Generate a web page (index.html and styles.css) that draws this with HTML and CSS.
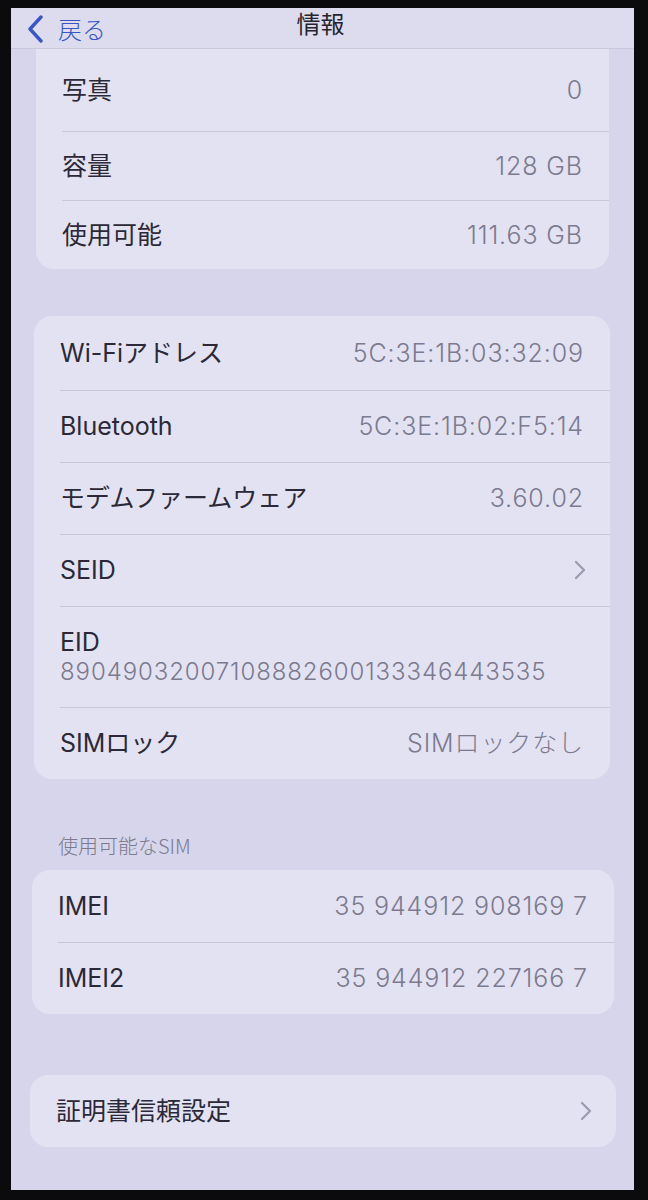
FILE: index.html
```html
<!DOCTYPE html>
<html lang="ja">
<head>
<meta charset="utf-8">
<title>情報</title>
<link rel="stylesheet" href="styles.css">
</head>
<body>
<div class="device">
  <div class="screen">
    <header class="nav">
      <div class="back">
        <svg class="back-icon" width="18" height="28" viewBox="0 0 18 28"><path d="M15 2 L4 14 L15 26" fill="none" stroke="#3b55c6" stroke-width="3.4" stroke-linecap="round" stroke-linejoin="round"/></svg>
        <span class="back-text">戻る</span>
      </div>
      <h1 class="title">情報</h1>
      <div class="nav-spacer"></div>
    </header>

    <section class="card card-1">
      <div class="row row-first"><span class="label">写真</span><span class="value">0</span></div>
      <div class="row"><span class="label">容量</span><span class="value">128 GB</span></div>
      <div class="row"><span class="label">使用可能</span><span class="value">111.63 GB</span></div>
    </section>

    <section class="card card-2">
      <div class="row row-tall"><span class="label">Wi-Fiアドレス</span><span class="value">5C:3E:1B:03:32:09</span></div>
      <div class="row"><span class="label">Bluetooth</span><span class="value">5C:3E:1B:02:F5:14</span></div>
      <div class="row"><span class="label">モデムファームウェア</span><span class="value">3.60.02</span></div>
      <div class="row"><span class="label">SEID</span>
        <svg class="chev" width="12" height="20" viewBox="0 0 12 20"><path d="M2 2 L10 10 L2 18" fill="none" stroke="#9b9aae" stroke-width="2.2" stroke-linecap="round" stroke-linejoin="round"/></svg>
      </div>
      <div class="row row-stack"><span class="label">EID</span><span class="value eid">89049032007108882600133346443535</span></div>
      <div class="row"><span class="label">SIMロック</span><span class="value">SIMロックなし</span></div>
    </section>

    <p class="section-head">使用可能なSIM</p>
    <section class="card card-3">
      <div class="row"><span class="label">IMEI</span><span class="value">35 944912 908169 7</span></div>
      <div class="row"><span class="label">IMEI2</span><span class="value">35 944912 227166 7</span></div>
    </section>

    <section class="card card-4">
      <div class="row"><span class="label">証明書信頼設定</span>
        <svg class="chev" width="12" height="20" viewBox="0 0 12 20"><path d="M2 2 L10 10 L2 18" fill="none" stroke="#9b9aae" stroke-width="2.2" stroke-linecap="round" stroke-linejoin="round"/></svg>
      </div>
    </section>
  </div>
</div>
</body>
</html>
```

FILE: styles.css
```css
* { box-sizing: border-box; }
html, body { margin: 0; padding: 0; background: #0b0b0d; }
body {
  width: 648px;
  height: 1200px;
  overflow: hidden;
  font-family: Inter, "Noto Sans CJK JP", sans-serif;
}
.device {
  padding: 8px 14px 10px 11px;
  background: #0b0b0d;
  height: 1200px;
}
.screen {
  height: 1182px;
  background: #d6d5eb;
  display: flex;
  flex-direction: column;
}
.nav {
  height: 41px;
  flex: none;
  background: #dddcef;
  border-bottom: 1px solid #c9c8dc;
  display: grid;
  grid-template-columns: 1fr auto 1fr;
  align-items: center;
}
.back {
  display: flex;
  align-items: center;
  gap: 14px;
  padding-left: 15px;
  margin-top: 2px;
}
.back-text {
  font-family: "Noto Sans CJK JP", sans-serif;
  font-size: 24px;
  font-weight: 300;
  color: #3b55c6;
  line-height: 1;
}
.title {
  align-self: start;
  margin: 1px 0 0 0;
  font-family: "Noto Sans CJK JP", sans-serif;
  font-size: 24px;
  font-weight: 400;
  color: #26242f;
  line-height: 28px;
  transform: translateX(-2px);
}
.card {
  background: #e3e2f3;
  border-radius: 18px;
  flex: none;
}
.card-1 { margin: 0 25px 0 25px; border-radius: 0 0 18px 18px; }
.card-2 { margin: 47px 24px 0 23px; }
.card-3 { margin: 0 20px 0 21px; }
.card-4 { margin: 61px 18px 0 19px; }
.row {
  height: 72px;
  display: flex;
  align-items: center;
  justify-content: space-between;
  padding: 0 26px 0 26px;
  position: relative;
}
.row + .row::before {
  content: "";
  position: absolute;
  left: 26px;
  right: 0;
  top: 0;
  border-top: 1px solid #c8c7db;
}
.card-1 .row { height: 69px; }
.card-1 .row-first { height: 82px; }
.row-tall { height: 74px; }
.row-stack {
  height: 101px;
  flex-direction: column;
  align-items: flex-start;
  justify-content: center;
  gap: 1px;
}
.label {
  font-size: 25px;
  font-weight: 400;
  color: #2b2937;
  line-height: 1.2;
}
.value {
  font-size: 25px;
  font-weight: 300;
  color: #7b7a8e;
  line-height: 1.2;
  letter-spacing: 0.9px;
}
.eid {
  font-size: 24px;
  letter-spacing: 0.9px;
}
.chev { flex: none; margin-right: -2px; }
.section-head {
  margin: 56px 0 13px 47px;
  font-family: "Noto Sans CJK JP", sans-serif;
  font-size: 20px;
  font-weight: 300;
  color: #7b7a8e;
  line-height: 22px;
  flex: none;
}
```
